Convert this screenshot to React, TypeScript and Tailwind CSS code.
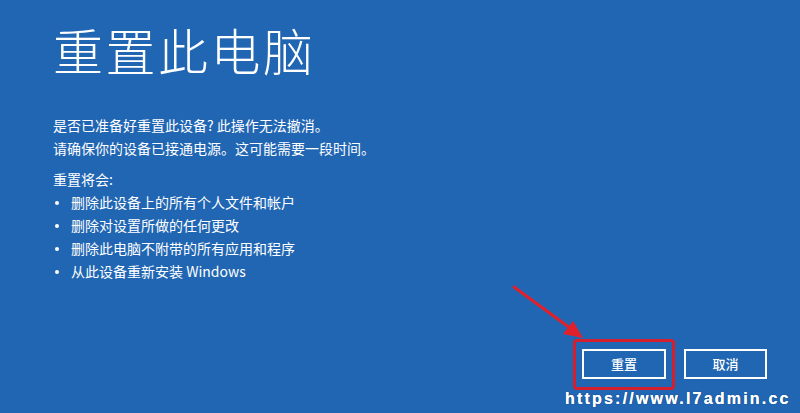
export default function App() {
  const items = [
    "删除此设备上的所有个人文件和帐户",
    "删除对设置所做的任何更改",
    "删除此电脑不附带的所有应用和程序",
    "从此设备重新安装 Windows",
  ];
  const cjk = { fontFamily: '"Noto Sans CJK SC", "Noto Sans", sans-serif' };

  return (
    <div className="relative w-[800px] h-[413px] overflow-hidden bg-[#2166b3] text-white" style={cjk}>
      <div className="flex flex-col pl-[53px] pt-[22px]">
        <h1 className="text-[50px] leading-[54px] font-light tracking-[2.5px]">重置此电脑</h1>

        <div className="mt-[38px] flex flex-col text-[14px] leading-[23px]">
          <p>是否已准备好重置此设备? 此操作无法撤消。</p>
          <p>请确保你的设备已接通电源。这可能需要一段时间。</p>
        </div>

        <div className="mt-[8px] flex flex-col text-[14px] leading-[23px]">
          <p>重置将会:</p>
          <ul className="flex flex-col">
            {items.map((t) => (
              <li key={t} className="flex items-center">
                <span className="w-[18px] flex pl-[2px]">
                  <span className="w-[4px] h-[4px] rounded-full bg-white" />
                </span>
                <span>{t}</span>
              </li>
            ))}
          </ul>
        </div>
      </div>

      <div className="absolute left-[582px] top-[349px] flex gap-[18px]">
        <button className="w-[84px] h-[30px] border-2 border-white text-[13px] font-medium">重置</button>
        <button className="w-[83px] h-[30px] border-2 border-white text-[13px] font-medium">取消</button>
      </div>

      {/* annotation */}
      <div className="absolute left-[573px] top-[339px] w-[102px] h-[51px] border-[3px] border-[#d41f2e] rounded-[4px]" />
      <svg className="absolute left-0 top-0" width="800" height="413">
        <line x1="514" y1="287" x2="570" y2="328" stroke="#e0202a" strokeWidth="3" strokeLinecap="round" />
        <polygon points="583,338 563,334 573,321" fill="#e0202a" />
      </svg>

      <div
        className="absolute left-[565px] top-[389px] text-[16px] leading-[20px] font-bold tracking-[2.2px] text-white whitespace-nowrap"
        style={{ fontFamily: '"Liberation Sans", Arial, sans-serif', textShadow: "0 0 0.6px #fff, 0 0 1px #0b2f63" }}
      >
        https://www.l7admin.cc
      </div>
    </div>
  );
}
